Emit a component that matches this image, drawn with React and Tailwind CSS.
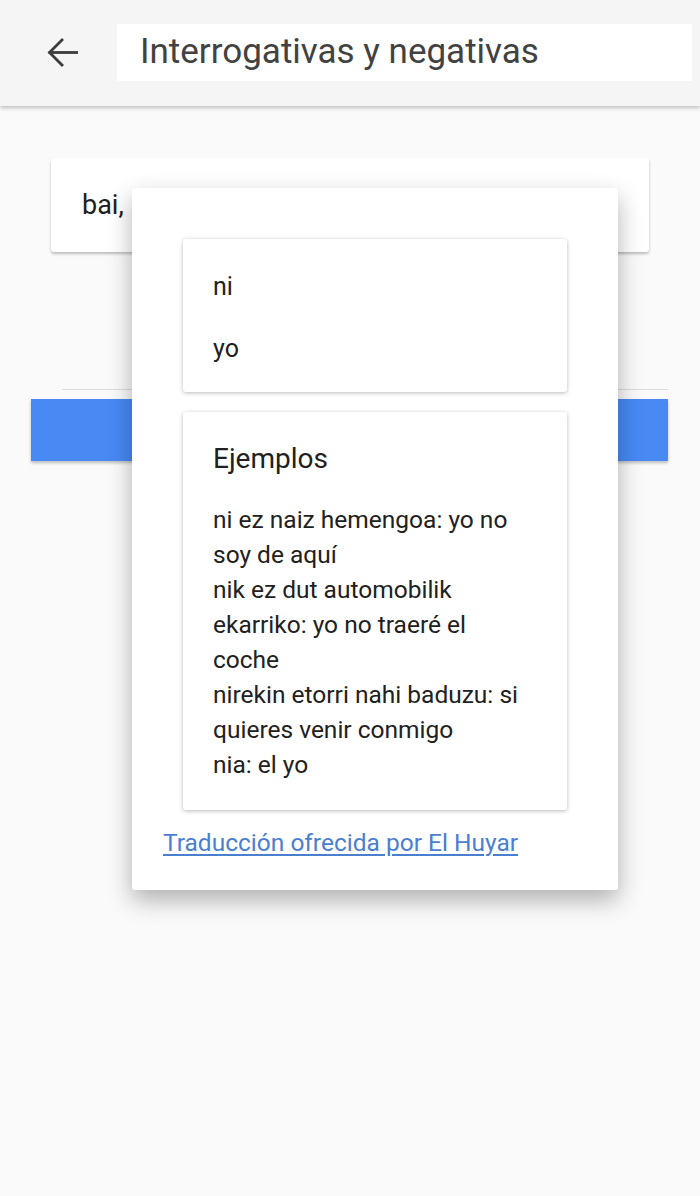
export default function App() {
  const examples = [
    'ni ez naiz hemengoa: yo no',
    'soy de aquí',
    'nik ez dut automobilik',
    'ekarriko: yo no traeré el',
    'coche',
    'nirekin etorri nahi baduzu: si',
    'quieres venir conmigo',
    'nia: el yo',
  ]

  return (
    <div className="relative min-h-[1196px] bg-[#fafafa] font-['Roboto',sans-serif] text-[#212121]">
      {/* Header */}
      <div className="h-[106px] bg-[#f5f5f5] shadow-[0_2px_4px_rgba(0,0,0,0.24)] flex items-start pt-[24px]">
        <div className="w-[117px] h-[57px] flex items-center pl-[47px]">
          <svg width="31" height="29" viewBox="0 0 31 29" fill="none" stroke="#3c3c3c" strokeWidth="2.8" strokeLinecap="square">
            <path d="M30 14.5H3" />
            <path d="M15 2L2.5 14.5L15 27" strokeLinejoin="miter" />
          </svg>
        </div>
        <div className="flex-1 mr-[8px] h-[57px] bg-white flex items-center pl-[23px] text-[35px] text-[#424242]">
          Interrogativas y negativas
        </div>
      </div>

      {/* Content */}
      <div className="mt-[52px] ml-[51px] w-[598px] h-[94px] bg-white rounded-[3px] shadow-[0_2px_3px_rgba(0,0,0,0.25)] flex items-center pl-[31px] text-[27px]">
        bai,
      </div>
      <div className="mt-[137px] ml-[62px] w-[606px] h-px bg-[#dcdcdc]" />
      <div className="mt-[9px] ml-[31px] w-[637px] h-[62px] bg-[#4889f4] shadow-[0_2px_3px_rgba(0,0,0,0.25)]" />

      {/* Dialog */}
      <div className="absolute left-[132px] top-[188px] w-[486px] h-[702px] bg-white rounded-[3px] shadow-[0_10px_24px_rgba(0,0,0,0.3)] px-[51px] pt-[51px]">
        <div className="bg-white rounded-[3px] shadow-[0_1px_4px_rgba(0,0,0,0.28)] pl-[30px] pt-[30px] pb-[25px] h-[153px]">
          <div className="text-[25px] leading-[36px]">ni</div>
          <div className="mt-[26px] text-[25px] leading-[36px]">yo</div>
        </div>
        <div className="mt-[20px] bg-white rounded-[3px] shadow-[0_1px_4px_rgba(0,0,0,0.28)] pl-[30px] pt-[29px] h-[398px]">
          <div className="text-[28px] leading-[36px]">Ejemplos</div>
          <div className="mt-[25px] text-[24.5px] leading-[35px]">
            {examples.map((line) => (
              <div key={line} className="whitespace-nowrap">{line}</div>
            ))}
          </div>
        </div>
        <a href="#" className="block mt-[18px] -ml-[20px] text-[24.5px] leading-[30px] text-[#4a7fd0] underline underline-offset-[3px]">
          Traducción ofrecida por El Huyar
        </a>
      </div>
    </div>
  )
}
